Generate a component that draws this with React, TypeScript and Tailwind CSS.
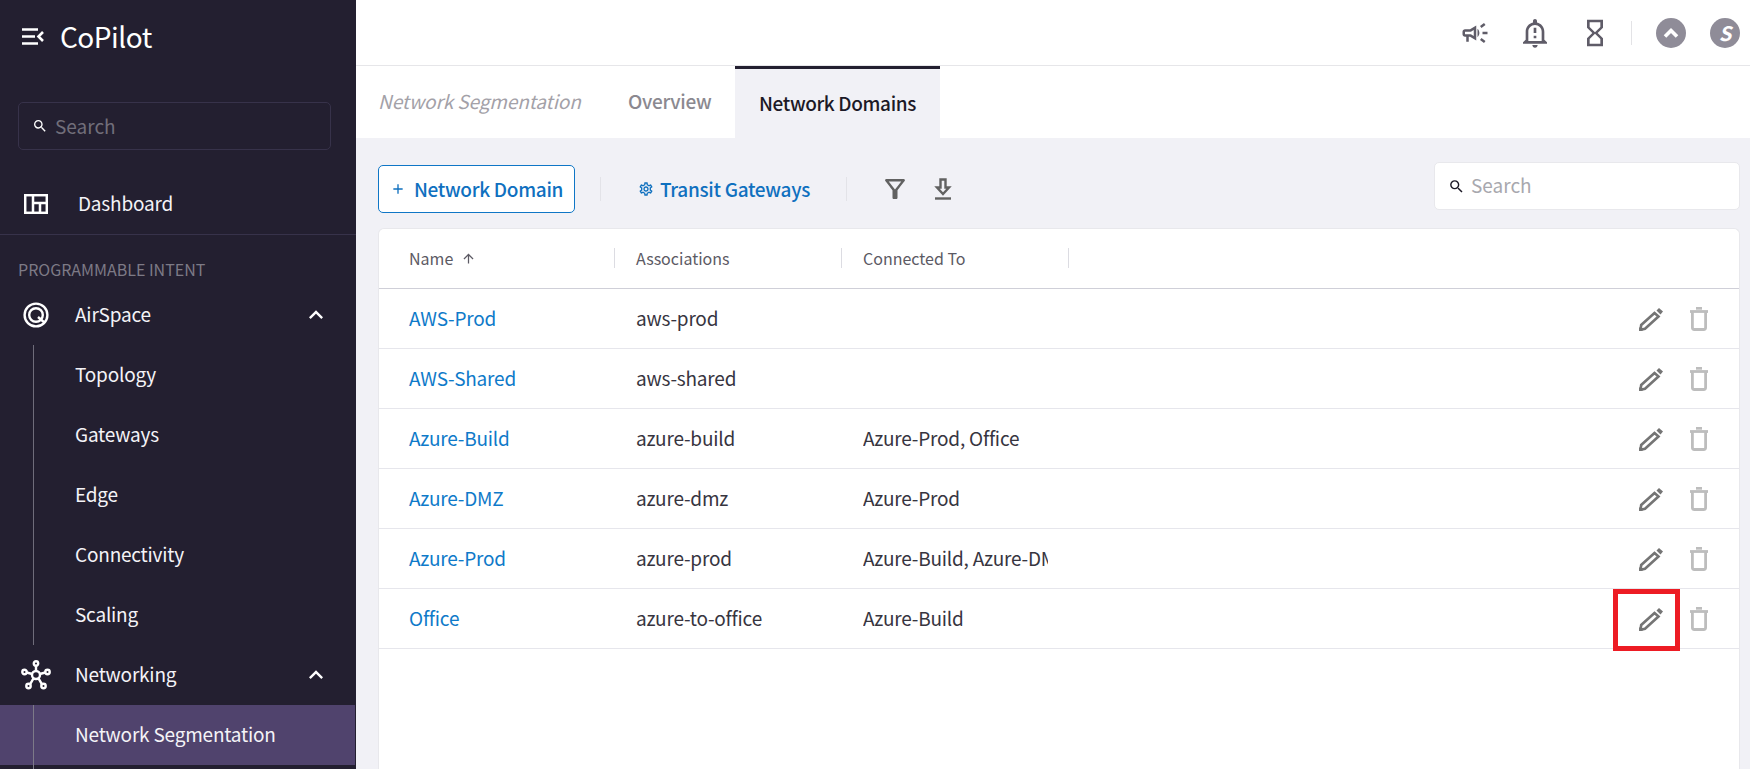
import {
  MdSearch,
  MdKeyboardArrowUp,
  MdOutlineCampaign,
  MdOutlineNotificationImportant,
  MdOutlineHourglassEmpty,
  MdOutlineFilterAlt,
  MdOutlineSettings,
  MdArrowUpward,
  MdAdd,
} from 'react-icons/md';

const font = { fontFamily: '"Noto Sans CJK SC", "Noto Sans", sans-serif' };

const rows = [
  { name: 'AWS-Prod', assoc: 'aws-prod', conn: '' },
  { name: 'AWS-Shared', assoc: 'aws-shared', conn: '' },
  { name: 'Azure-Build', assoc: 'azure-build', conn: 'Azure-Prod, Office' },
  { name: 'Azure-DMZ', assoc: 'azure-dmz', conn: 'Azure-Prod' },
  { name: 'Azure-Prod', assoc: 'azure-prod', conn: 'Azure-Build, Azure-DMZ' },
  { name: 'Office', assoc: 'azure-to-office', conn: 'Azure-Build', marked: true },
];

const subItems = ['Topology', 'Gateways', 'Edge', 'Connectivity', 'Scaling'];

const MenuIcon = () => (
  <svg width="22" height="17" viewBox="0 0 22 17" fill="none" stroke="white" strokeWidth="2.600">
    <path d="M0 1.500h16M0 8.500h13M0 15.500h16M21 4l-4.500 4.500L21 13" />
  </svg>
);

const DashboardIcon = () => (
  <svg width="24" height="20" viewBox="0 0 24 20" fill="none" stroke="white" strokeWidth="2.500">
    <rect x="1.200" y="1.200" width="21.600" height="17.600" />
    <path d="M9 1v18M9 9h14M16 9v10" />
  </svg>
);

const AirSpaceIcon = () => (
  <svg width="26" height="26" viewBox="0 0 26 26" fill="none" stroke="white" strokeWidth="2.400">
    <circle cx="13" cy="13" r="11.400" />
    <circle cx="13" cy="13" r="6.800" />
    <path d="M15 15l7 6" />
  </svg>
);

const NetworkingIcon = () => (
  <svg width="30" height="30" viewBox="0 0 30 30" fill="none" stroke="white" strokeWidth="2.400">
    <circle cx="15" cy="15" r="4" />
    <circle cx="15" cy="3.500" r="2.200" />
    <circle cx="3.500" cy="12" r="2.200" />
    <circle cx="26.500" cy="12" r="2.200" />
    <circle cx="7.500" cy="26" r="2.200" />
    <circle cx="22.500" cy="26" r="2.200" />
    <path d="M15 6v5M5.700 12.500l5.500 1.500M24.300 12.500l-5.500 1.500M9 24.300l3.500-6M21 24.300l-3.500-6" />
  </svg>
);

const PencilIcon = () => (
  <svg width="24" height="24" viewBox="0 0 24 24" fill="none">
    <path d="M15.500 6l4 3.500L6 21.800l-4.500 1 .7-4.800z" stroke="#757575" strokeWidth="2.600" />
    <path d="M17.500 3.500L20 1l4 3.500-2.500 3z" fill="#757575" />
    <path d="M0 24v-4l4 4z" fill="#757575" />
  </svg>
);

const TrashIcon = () => (
  <svg width="18" height="24" viewBox="0 0 18 24" fill="none" stroke="#bdbdbd" strokeWidth="2.800">
    <path d="M0 4.500h18" />
    <path d="M6 1.300h6" />
    <path d="M2.400 5v15.500a2 2 0 0 0 2 2h9.200a2 2 0 0 0 2-2V5" />
  </svg>
);

const DownloadIcon = () => (
  <svg width="24" height="24" viewBox="0 0 24 24" fill="none" stroke="#616161" strokeWidth="2.400">
    <path d="M4 21.500h16" />
    <path d="M9.500 2.500h5v8h3.500L12 17 6 10.500h3.500z" />
  </svg>
);

const ThickChevron = () => (
  <svg width="16" height="11" viewBox="0 0 16 11" fill="none" stroke="white" strokeWidth="3.600">
    <path d="M2 9.500l6-6 6 6" />
  </svg>
);

const NavLabel = ({ label }: { label: string }) => (
  <span className="pb-[1px] text-[19px] tracking-[-0.2px] text-[#f4f3f7]">{label}</span>
);

const SubRow = ({ label, active }: { label: string; active?: boolean }) => (
  <div className={`flex h-[60px] items-center pl-[75px] ${active ? 'mr-px bg-[#50436d]' : ''}`}>
    <NavLabel label={label} />
  </div>
);

const Sidebar = () => (
  <aside className="relative flex h-[769px] w-[356px] shrink-0 flex-col overflow-hidden bg-[#231f30]">
    <div className="flex h-[73px] items-center gap-[16px] pl-[22px]">
      <MenuIcon />
      <span className="mb-[2px] text-[28px] leading-none tracking-[-0.5px] text-white">CoPilot</span>
    </div>
    <div className="mx-[18px] mt-[29px] flex h-[48px] w-[313px] items-center gap-[7px] rounded-[5px] border border-[#37324a] pl-[13px]">
      <MdSearch className="text-[16px] text-white" />
      <span className="text-[19px] text-[#716e7a]">Search</span>
    </div>
    <div className="mt-[25px] flex h-[60px] items-center border-b border-[#37324a] pb-[2px]">
      <span className="ml-[24px] flex w-[54px]"><DashboardIcon /></span>
      <NavLabel label="Dashboard" />
    </div>
    <div className="flex h-[50px] items-end pb-[6px] pl-[18px] text-[16px] leading-[20px] text-[#7d7a86]">PROGRAMMABLE INTENT</div>
    <div className="flex h-[60px] items-center">
      <span className="ml-[23px] flex w-[52px]"><AirSpaceIcon /></span>
      <NavLabel label="AirSpace" />
      <MdKeyboardArrowUp className="ml-auto mr-[26px] text-[28px] text-white" />
    </div>
    <div className="relative">
      <div className="absolute bottom-0 left-[33px] top-0 w-px bg-[#6f6c7a]" />
      {subItems.map((item) => (
        <SubRow key={item} label={item} />
      ))}
    </div>
    <div className="flex h-[60px] items-center">
      <span className="ml-[21px] flex w-[54px]"><NetworkingIcon /></span>
      <NavLabel label="Networking" />
      <MdKeyboardArrowUp className="ml-auto mr-[26px] text-[28px] text-white" />
    </div>
    <div className="relative flex-1">
      <SubRow label="Network Segmentation" active />
      <div className="absolute bottom-0 left-[33px] top-0 w-px bg-[#7d7a88]" />
    </div>
  </aside>
);

const TopBar = () => (
  <header className="flex h-[66px] shrink-0 items-center justify-end border-b border-[#e6e6e9] bg-white pr-[10px]">
    <MdOutlineCampaign className="mr-[29px] text-[30px] text-[#5f5c68]" />
    <MdOutlineNotificationImportant className="mr-[28px] text-[32px] text-[#5f5c68]" />
    <MdOutlineHourglassEmpty className="mr-[20px] text-[32px] text-[#5f5c68]" />
    <div className="mr-[24px] h-[24px] w-px bg-[#e3e3e6]" />
    <span className="mr-[24px] flex h-[30px] w-[30px] items-center justify-center rounded-full bg-[#8f8c98]">
      <ThickChevron />
    </span>
    <span className="flex h-[30px] w-[30px] items-center justify-center rounded-full bg-[#8f8c98] text-[20px] font-bold italic text-white">S</span>
  </header>
);

const Tabs = () => (
  <div className="flex h-[72px] shrink-0 items-center bg-white pl-[22px]">
    <span className="w-[250px] pb-[1px] text-[19px] italic tracking-[-0.1px] text-[#a3a1a8]">Network Segmentation</span>
    <span className="w-[107px] pb-[1px] text-[19px] font-medium tracking-[-0.3px] text-[#8b8990]">Overview</span>
    <div className="flex h-full w-[205px] items-center justify-center border-t-[3px] border-[#231f30] bg-[#f1f1f6] pb-[1px] text-[19px] font-medium tracking-[-0.37px] text-[#1c1926]">
      Network Domains
    </div>
  </div>
);

const Toolbar = () => (
  <div className="flex h-[90px] shrink-0 items-start pl-[22px] pr-[10px] pt-[27px]">
    <div className="flex h-[48px] items-center">
      <button className="flex h-[48px] w-[197px] items-center justify-center gap-[8px] rounded-[5px] border border-[#0f76c6] bg-white text-[19px] font-medium tracking-[-0.3px] text-[#0f70bf]">
        <MdAdd className="text-[16px]" />
        Network Domain
      </button>
      <div className="ml-[25px] h-[24px] w-px bg-[#e3e3e8]" />
      <div className="ml-[37px] flex items-center gap-[6px] text-[19px] font-medium tracking-[-0.3px] text-[#0f70bf]">
        <MdOutlineSettings className="text-[16px]" />
        Transit Gateways
      </div>
      <div className="ml-[36px] h-[24px] w-px bg-[#e3e3e8]" />
      <MdOutlineFilterAlt className="ml-[33px] text-[30px] text-[#616161]" />
      <span className="ml-[21px] flex"><DownloadIcon /></span>
    </div>
    <div className="ml-auto -mt-[3px] flex h-[48px] w-[306px] items-center gap-[6px] rounded-[5px] border border-[#e8e8ec] bg-white pl-[13px]">
      <MdSearch className="text-[17px] text-[#1c1926]" />
      <span className="pb-[1px] text-[19px] text-[#a8a8ae]">Search</span>
    </div>
  </div>
);

const HeaderCell = ({ label, children }: { label: string; children?: React.ReactNode }) => (
  <div className="flex h-[20px] w-[227px] items-center border-r border-[#dcdce2] pl-[21px] text-[16px] text-[#5c5a64] first:w-[236px] first:pl-[30px]">
    {label}
    {children}
  </div>
);

const Table = () => (
  <div className="ml-[22px] mr-[10px] flex-1 rounded-t-[6px] border border-b-0 border-[#e8e8ec] bg-white">
    <div className="flex h-[60px] items-center border-b border-[#cfcfd8] pb-[1px]">
      <HeaderCell label="Name">
        <MdArrowUpward className="ml-[8px] text-[15px]" />
      </HeaderCell>
      <HeaderCell label="Associations" />
      <HeaderCell label="Connected To" />
    </div>
    {rows.map((row) => (
      <div key={row.name} className="relative flex h-[60px] items-center border-b border-[#e6e6ec] text-[19px] tracking-[-0.2px]">
        <div className="w-[236px] pl-[30px] text-[#0f7ac9]">{row.name}</div>
        <div className="w-[227px] pl-[21px] text-[#37353f]">{row.assoc}</div>
        <div className="ml-[21px] w-[185px] overflow-hidden whitespace-nowrap text-[#37353f]">{row.conn}</div>
        <div className="ml-auto mr-[31px] flex items-center gap-[27px]">
          <PencilIcon />
          <TrashIcon />
        </div>
        {row.marked && (
          <div className="absolute left-[1234px] top-0 h-[62px] w-[67px] border-[5px] border-[#ed1c24]" />
        )}
      </div>
    ))}
  </div>
);

export default function App() {
  return (
    <div className="flex h-[769px] w-[1750px] overflow-hidden bg-[#f1f1f6]" style={font}>
      <Sidebar />
      <main className="flex min-w-0 flex-1 flex-col">
        <TopBar />
        <Tabs />
        <Toolbar />
        <Table />
      </main>
    </div>
  );
}
